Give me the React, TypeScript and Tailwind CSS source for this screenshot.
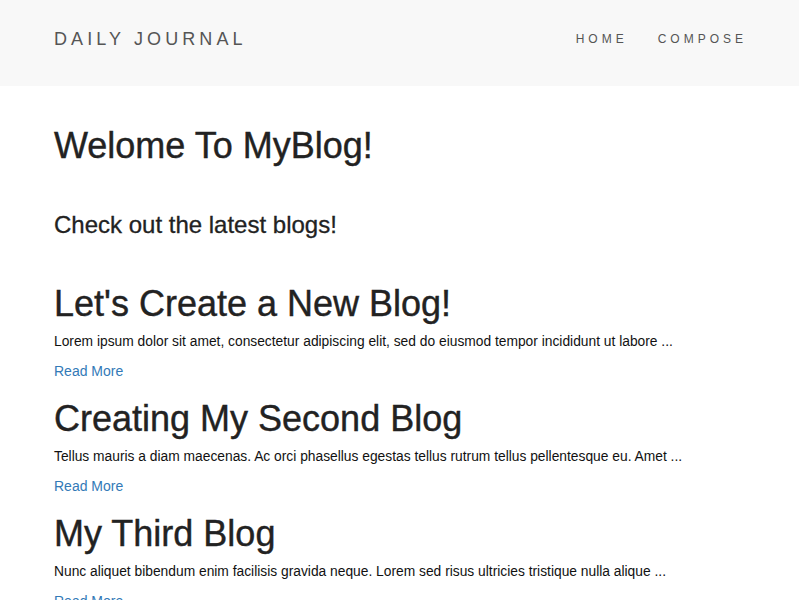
import * as React from "react"

const posts = [
  {
    title: "Let's Create a New Blog!",
    body: "Lorem ipsum dolor sit amet, consectetur adipiscing elit, sed do eiusmod tempor incididunt ut labore ...",
  },
  {
    title: "Creating My Second Blog",
    body: "Tellus mauris a diam maecenas. Ac orci phasellus egestas tellus rutrum tellus pellentesque eu. Amet ...",
  },
  {
    title: "My Third Blog",
    body: "Nunc aliquet bibendum enim facilisis gravida neque. Lorem sed risus ultricies tristique nulla alique ...",
  },
]

export default function App() {
  return (
    <div className="min-h-screen bg-white font-['Liberation_Sans',Helvetica,Arial,sans-serif] text-[#222]">
      <nav className="flex h-[86px] items-center justify-between bg-[#f8f8f8] pb-[8px] pl-[54px] pr-[52px]">
        <a className="text-[18px] tracking-[4.1px] text-[#555]">DAILY JOURNAL</a>
        <ul className="flex gap-[30px] text-[12px] tracking-[4px] text-[#555]">
          <li>HOME</li>
          <li>COMPOSE</li>
        </ul>
      </nav>

      <main className="px-[54px]">
        <h1 className="mt-[40px] text-[36px] leading-[40px] [-webkit-text-stroke:0.4px]">Welome To MyBlog!</h1>
        <h3 className="mt-[45px] text-[24px] leading-[28px] [-webkit-text-stroke:0.3px]">
          Check out the latest blogs!
        </h3>

        <div className="mt-[43px] flex flex-col gap-[16px]">
          {posts.map((p) => (
            <div key={p.title}>
              <h1 className="text-[36px] leading-[44px] [-webkit-text-stroke:0.4px]">{p.title}</h1>
              <p className="mt-[6px] text-[13.8px] leading-[20px] text-[#111]">{p.body}</p>
              <a className="mt-[9px] block text-[14px] leading-[20px] text-[#337ab7]">Read More</a>
            </div>
          ))}
        </div>
      </main>
    </div>
  )
}
